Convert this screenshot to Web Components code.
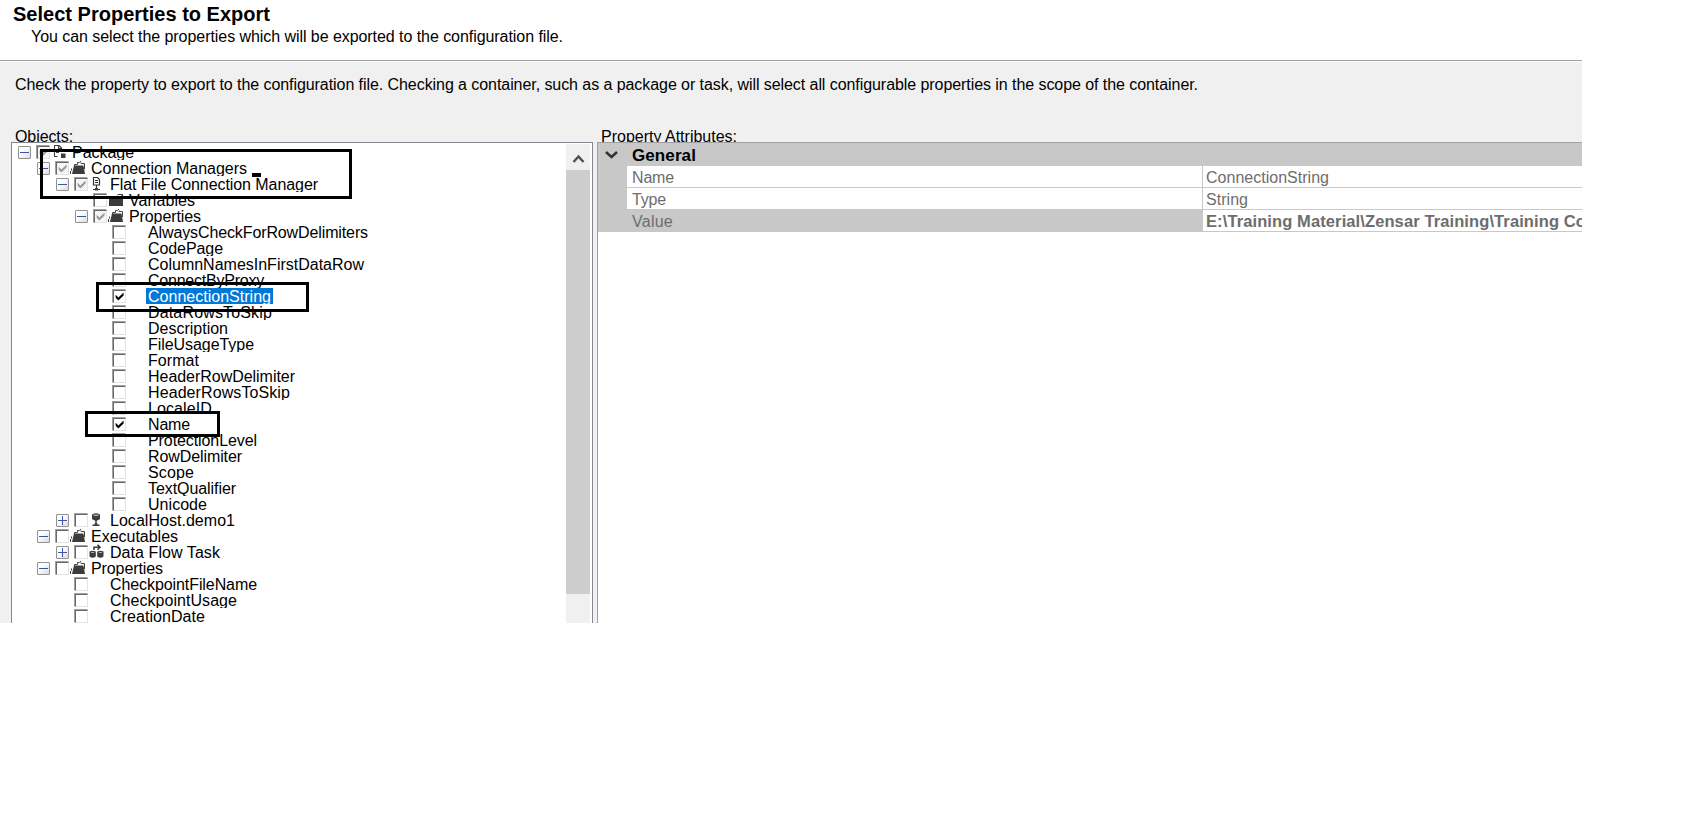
<!DOCTYPE html>
<html lang="en"><head><meta charset="utf-8"><title>Select Properties to Export</title>
<style>body{margin:0;background:#fff;font:16px/18px "Liberation Sans",Arial,sans-serif;color:#000}</style></head>
<body>
<export-wizard></export-wizard>
<script>
// Text whose advance is adjusted to a given pixel width.
class FitText extends HTMLElement{
  connectedCallback(){
    this.attachShadow({mode:'open'}).innerHTML='<style>:host{display:inline-block;white-space:pre}</style><slot></slot>';
    const w=+this.getAttribute('w');
    if(w){const n=this.getBoundingClientRect().width;this.style.letterSpacing=((w-n)/this.textContent.length)+'px';}
  }
}
customElements.define('fit-text',FitText);

const ICONS={
  folder:'<path d="M4.500 6V4.500h3v-2h2l1.500-1.500M11 2.500V3.500h3.500V9" fill="none" stroke="#444" stroke-width="1"/><path d="M4 5.500h9.500l1.500 8.500H2z" fill="#3c3c3c"/><path d="M1.500 8.500v2M.5 11v3" stroke="#444"/>',
  closed:'<path d="M1 4h8l1-2h5v12H1z" fill="#3c3c3c"/><path d="M9.500 3.500h4" stroke="#fff"/>',
  pkg:'<path d="M7.500 1.500h-4v4M3.500 7.500v5h3M7.500 1v3.500h3.500M8 1.500l3 3M11.500 5v2M5 8.500h3" fill="none" stroke="#444" stroke-width="1.1"/><path d="M10 9.500h4.500V14H10z" fill="#3c3c3c"/>',
  file:'<path d="M4.500 1.500h4l2 2v5.500h-6zM6 4.500h3M6 6.500h3M7.500 9v3M4 13.500h7" fill="none" stroke="#333" stroke-width="1.2"/><path d="M6 12h3v2.500H6z" fill="#444"/>',
  db:'<path d="M3 2.500Q7 0 11 2.500V7Q7 10.500 3 7z" fill="#3c3c3c"/><path d="M4.500 2.800Q7 4.200 9.500 2.800" stroke="#ddd" fill="none"/><path d="M7 8v4M3.500 13.200h7" stroke="#3c3c3c" stroke-width="1.5"/><path d="M5.500 11.500h3v2.500h-3z" fill="#3c3c3c"/>',
  flow:'<path d="M.5 7.500Q3.500 6 6.800 7.500V12.500Q3.500 15 .5 12.500zM8.200 7.500Q11.500 6 14.500 7.500V12.500Q11.500 15 8.200 12.500z" fill="#3c3c3c"/><path d="M2.200 8.500h3M9.900 8.500h3" stroke="#ccc" stroke-width=".8"/><path d="M5 6V3.200h6M8.500 .7L11 3.200 8.500 5.700" fill="none" stroke="#3c3c3c" stroke-width="1.600"/>'
};
class TreeNode extends HTMLElement{
  connectedCallback(){
    const a=n=>this.getAttribute(n),t=a('toggle'),c=a('check'),i=a('icon');
    this.attachShadow({mode:'open'}).innerHTML=`<style>
    :host{display:flex;height:16px;box-sizing:border-box;padding-left:${6+19*a('level')}px;overflow:hidden}
    .t{width:13px;height:13px;margin:2px 5px 0 0;box-sizing:border-box;flex:none}
    .t.on{border:1px solid #919191;border-radius:1px;background:linear-gradient(135deg,#fff 35%,#dcdcdc)}
    .c{width:14px;height:14px;margin:1px 0 0;box-sizing:border-box;flex:none;border:1px solid;border-color:#a0a0a0 #fff #fff #a0a0a0;background:#fff}
    .c>svg{display:block;width:13px;height:13px;box-sizing:border-box;border:1px solid;border-color:#696969 #e3e3e3 #e3e3e3 #696969}
    .c.mixed>svg{background:repeating-conic-gradient(#fff 0 25%,#ececec 0 50%) 0 0/2px 2px}
    .t svg{display:block}.i{width:16px;height:16px;flex:none;margin-left:1px}
    .l{margin-left:3px;padding:0 2px;height:16px;line-height:18px;overflow:hidden}
    .l.sel{background:#0078d7;color:#fff}
    </style><span class="t ${t?'on':''}">${t?`<svg width="11" height="11"><path d="M1 5.500h9${t=='+'?'M5.500 1v9':''}" stroke="#3b55a5"/></svg>`:''}</span>
    <span class="c ${c||''}"><svg viewBox="0 0 10 10">${c?`<path d="M1.500 3.500v2.700L4 8.600 8.700 4V1.400L4 6z" fill="${c=='mixed'?'#999':'#000'}"/>`:''}</svg></span>
    <svg class="i" viewBox="0 0 16 16">${ICONS[i]||''}</svg><span class="l ${this.hasAttribute('selected')?'sel':''}"><slot></slot></span>`;
  }
}
customElements.define('tree-node',TreeNode);

class ObjectTree extends HTMLElement{
  connectedCallback(){
    const rows=[[0,'-','mixed','pkg','Package',62],[1,'-','mixed','folder','Connection Managers',156],[2,'-','mixed','file','Flat File Connection Manager',208],[3,'','','closed','Variables',66],[3,'-','mixed','folder','Properties',72],
    ...[['AlwaysCheckForRowDelimiters',220],['CodePage',75],['ColumnNamesInFirstDataRow',216],['ConnectByProxy',116],['ConnectionString',123,1],['DataRowsToSkip',124],['Description',80],['FileUsageType',106],['Format',51],['HeaderRowDelimiter',147],['HeaderRowsToSkip',142],['LocaleID',64],['Name',42,1],['ProtectionLevel',109],['RowDelimiter',94],['Scope',46],['TextQualifier',88],['Unicode',59]].map(r=>[4,'',r[2]?'on':'','',r[0],r[1]]),
    [2,'+','','db','LocalHost.demo1',125],[1,'-','','folder','Executables',87],[2,'+','','flow','Data Flow Task',110],[1,'-','','folder','Properties',72],[2,'','','','CheckpointFileName',147],[2,'','','','CheckpointUsage',127],[2,'','','','CreationDate',95]];
    this.attachShadow({mode:'open'}).innerHTML=`<style>
    :host{display:grid;grid-template-columns:1fr 24px;box-sizing:border-box;width:582px;border:1px solid #828790;border-bottom:0;background:#fff;padding:1px 2px 0 0;overflow:hidden}
    .bar{background:#f0f0f0;display:flex;flex-direction:column}.bar svg{display:block;height:26px;width:24px;flex:none}.thumb{height:424px;background:#cdcdcd;flex:none}
    </style><div>${rows.map(r=>`<tree-node level="${r[0]}" toggle="${r[1]}" check="${r[2]}" icon="${r[3]}" ${r[4]=='ConnectionString'?'selected':''}><fit-text w="${r[5]}">${r[4]}</fit-text></tree-node>`).join('')}</div>
    <div class="bar"><svg><path d="M7.500 18l5-5.500 5 5.500" fill="none" stroke="#505050" stroke-width="2.500"/></svg><div class="thumb"></div></div>`;
  }
}
customElements.define('object-tree',ObjectTree);

class PropertyGrid extends HTMLElement{
  connectedCallback(){
    this.attachShadow({mode:'open'}).innerHTML=`<style>
    :host{display:block;box-sizing:border-box;width:985px;border:solid #a0a0a0;border-width:1px 0 0 1px;background:#fff;overflow:hidden}
    .h{display:flex;height:23px;background:#c8c8c8;font-weight:bold;font-size:17px;line-height:25px}.h svg{width:28px;height:23px;margin-right:6px}
    .r{display:grid;grid-template-columns:29px 575px 1fr;height:22px;color:#6d6d6d;line-height:23px}
    .g{background:#c8c8c8}.n,.v{box-sizing:border-box;border-bottom:1px solid #c8c8c8;white-space:nowrap;overflow:hidden}.n{padding-left:5px}.v{border-left:1px solid #c8c8c8;padding-left:3px}
    .last .n{background:#c8c8c8}.last .v{font-weight:bold;font-size:16.5px;background:#fff}
    </style><div class="h"><svg><path d="M8 9l5.500 5L19 9" fill="none" stroke="#333" stroke-width="2.500"/></svg><fit-text w="64">General</fit-text></div>
    <div class="r"><div class="g"></div><div class="n"><fit-text w="42">Name</fit-text></div><div class="v"><fit-text w="123">ConnectionString</fit-text></div></div>
    <div class="r"><div class="g"></div><div class="n"><fit-text w="34">Type</fit-text></div><div class="v"><fit-text w="42">String</fit-text></div></div>
    <div class="r last"><div class="g"></div><div class="n"><fit-text w="41">Value</fit-text></div><div class="v"><fit-text w="380">E:\\Training Material\\Zensar Training\\Training Co</fit-text></div></div>`;
  }
}
customElements.define('property-grid',PropertyGrid);

// Hand-drawn emphasis laid over the dialog.
class MarkBox extends HTMLElement{
  connectedCallback(){
    const [x,y,w,h]=this.getAttribute('box').split(' ');
    this.attachShadow({mode:'open'}).innerHTML=`<style>:host{display:block;position:absolute;box-sizing:border-box;left:${x}px;top:${y}px;width:${w}px;height:${h}px;border:3px solid #000}:host([solid]){background:#000;border:0}</style>`;
  }
}
customElements.define('mark-box',MarkBox);

class ExportWizard extends HTMLElement{
  connectedCallback(){
    this.attachShadow({mode:'open'}).innerHTML=`<style>
    :host{display:flex;flex-direction:column;position:relative;width:1582px;height:623px;background:#f0f0f0;overflow:hidden}
    header{box-sizing:border-box;height:61px;background:#fff;border-bottom:1px solid #a0a0a0;flex:none;padding:3px 0 0 13px}
    h1{font-size:20px;line-height:23px;margin:0}
    .sub{padding:2px 0 0 18px}
    .intro{box-sizing:border-box;border-top:1px solid #fff;height:68px;padding:14px 0 0 15px;flex:none}
    .labels{display:grid;grid-template-columns:586px 1fr;padding-left:15px;height:13px;overflow:hidden;line-height:16px;flex:none}
    main{display:flex;gap:4px;padding-left:11px;height:481px;flex:none}
    </style><header><h1><fit-text w="257">Select Properties to Export</fit-text></h1><div class="sub"><fit-text w="532">You can select the properties which will be exported to the configuration file.</fit-text></div></header>
    <div class="intro"><fit-text w="1183">Check the property to export to the configuration file. Checking a container, such as a package or task, will select all configurable properties in the scope of the container.</fit-text></div>
    <div class="labels"><div><fit-text w="58">Objects:</fit-text></div><div><fit-text w="136">Property Attributes:</fit-text></div></div>
    <main><object-tree></object-tree><property-grid></property-grid></main>
    <mark-box box="40 149 312 50"></mark-box><mark-box box="96 282 213 30"></mark-box><mark-box box="85 411 135 26"></mark-box><mark-box solid box="252 173 9 4"></mark-box>`;
  }
}
customElements.define('export-wizard',ExportWizard);
</script></body></html>
